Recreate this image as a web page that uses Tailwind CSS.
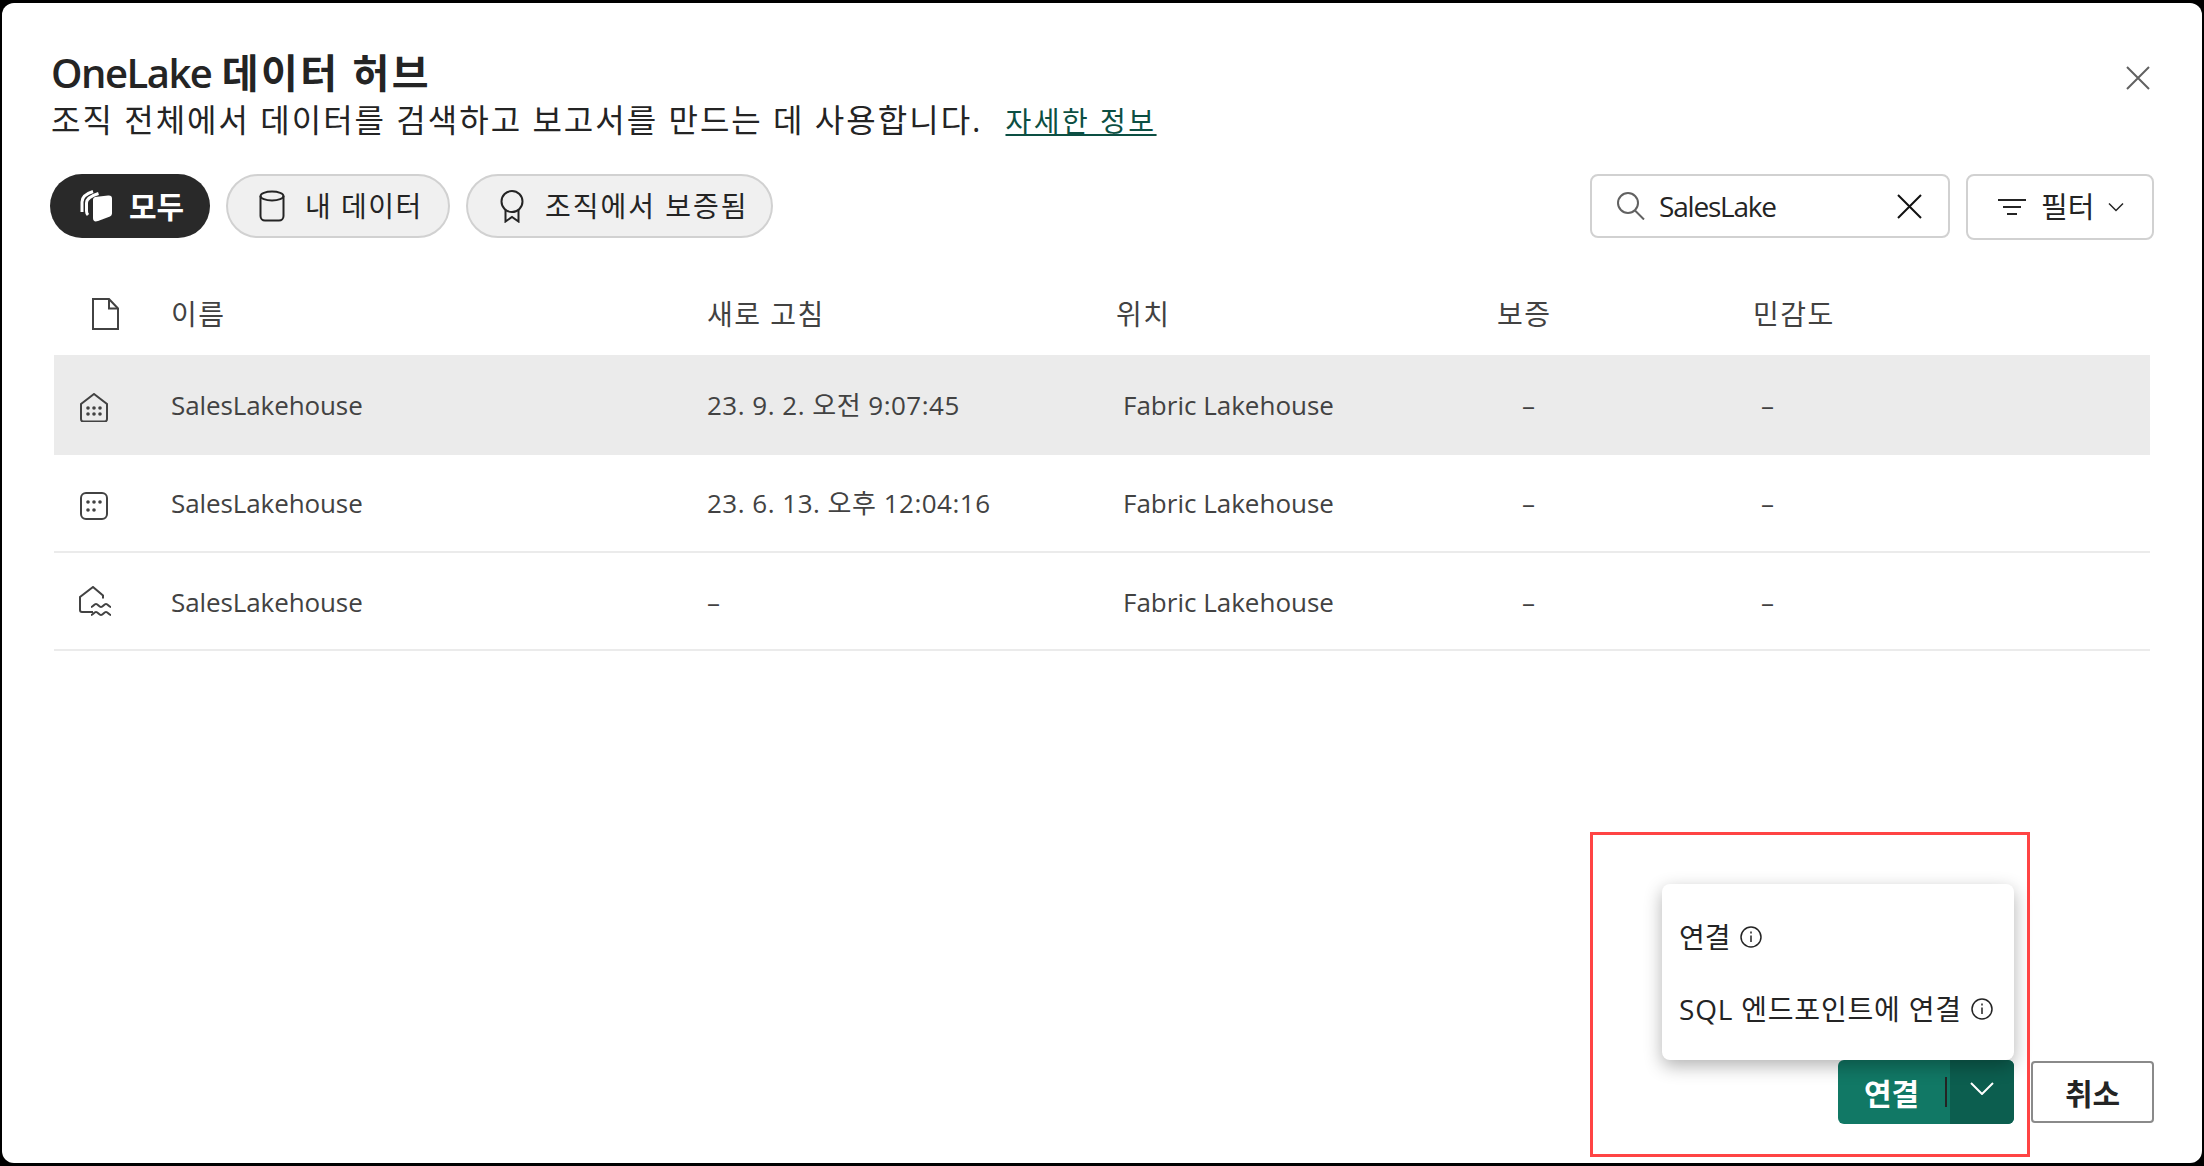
<!DOCTYPE html>
<html lang="ko">
<head>
  <meta charset="UTF-8" />
  <title>OneLake 데이터 허브</title>
  <script src="https://cdn.jsdelivr.net/npm/@tailwindcss/browser@4"></script>
</head>
<body class="bg-black font-['Open_Sans','Noto_Sans_CJK_KR',sans-serif] text-[#242424]">
  <div class="relative w-[2204px] h-[1166px] pt-[3px] px-[2px] pb-[3px] overflow-hidden">
    <div class="bg-white rounded-[12px] h-full flex flex-col">

      <!-- Header -->
      <header class="flex justify-between pl-[49px] pr-[52px] pt-[47px]">
        <div>
          <h1 class="text-[40px] leading-[46px] font-semibold"><span class="tracking-[-1.5px]">OneLake</span> <span class="tracking-[2.5px]">데이터 허브</span></h1>
          <p class="text-[32px] leading-[48px] tracking-[2px]">조직 전체에서 데이터를 검색하고 보고서를 만드는 데 사용합니다.<a href="#" class="ml-[23px] text-[28px] tracking-[2.5px] text-[#0c4f43] underline">자세한 정보</a></p>
        </div>
        <button class="mt-[16px] self-start text-[#616161]">
          <svg class="w-[24px] h-[24px]" viewBox="0 0 24 24" fill="none" stroke="currentColor" stroke-width="2"><path d="M1 1l22 22M23 1L1 23"/></svg>
        </button>
      </header>

      <!-- Toolbar -->
      <div class="flex items-start justify-between pl-[48px] pr-[48px] mt-[29px] h-[65px]">
        <div class="flex gap-[16px]">
          <button class="flex items-center h-[64px] w-[160px] pl-[29px] rounded-full bg-[#292929] text-white text-[30px] font-bold">
            <svg class="w-[34px] h-[32px] mr-[16px]" viewBox="0 0 34 32">
              <path fill="white" d="M14 9.500q0-2 2-2.500l13-1.500q4-.5 4 3v15q0 2-2 3l-12 4.500q-5 1.500-5-3z"/>
              <path fill="none" stroke="white" stroke-width="3" d="M3 22v-10c0-4 3-8 11-10.500"/>
              <path fill="none" stroke="white" stroke-width="3" d="M9 25c-1-1-1.500-2-1.500-4v-8c0-4 4-7 12-9.500"/>
            </svg>
            모두
          </button>
          <button class="flex items-center h-[64px] w-[224px] pl-[31px] rounded-full bg-[#f0f0f0] border-2 border-[#d1d1d1] text-[28px] tracking-[1.5px]">
            <svg class="w-[26px] h-[32px] mr-[20px]" viewBox="0 0 26 32" fill="none" stroke="#242424" stroke-width="2"><ellipse cx="13" cy="6" rx="11.500" ry="4.500"/><path d="M1.500 6v20c0 2.500 2 4.500 4.500 4.500h14c2.500 0 4.500-2 4.500-4.500V6"/></svg>
            내 데이터
          </button>
          <button class="flex items-center h-[64px] w-[307px] pl-[31px] rounded-full bg-[#f0f0f0] border-2 border-[#d1d1d1] text-[28px] tracking-[2px]">
            <svg class="w-[26px] h-[33px] mr-[20px]" viewBox="0 0 26 33" fill="none" stroke="#242424" stroke-width="2"><circle cx="13" cy="11.500" r="10.500"/><path d="M6.500 20v11.500L13 27l6.500 4.500V20"/></svg>
            조직에서 보증됨
          </button>
        </div>
        <div class="flex gap-[16px]">
          <div class="flex items-center w-[360px] h-[64px] pl-[24px] pr-[26px] rounded-[8px] border-2 border-[#d1d1d1] text-[28px]">
            <svg class="w-[30px] h-[28px] mr-[13px] shrink-0" viewBox="0 0 30 28" fill="none" stroke="#616161" stroke-width="2"><circle cx="12" cy="11" r="10"/><path d="M19 18.500l9 9"/></svg>
            <span class="flex-1 tracking-[-1.2px]">SalesLake</span>
            <svg class="w-[25px] h-[25px]" viewBox="0 0 25 25" fill="none" stroke="#111" stroke-width="2"><path d="M1 1l23 23M24 1L1 24"/></svg>
          </div>
          <button class="flex items-center w-[188px] h-[66px] pl-[30px] rounded-[8px] border-2 border-[#d1d1d1] text-[29px]">
            <svg class="w-[28px] h-[18px] mr-[15px]" viewBox="0 0 28 18" fill="none" stroke="#242424" stroke-width="2"><path d="M0 2h28M5 9h18M9 16h10"/></svg>
            필터
            <svg class="w-[16px] h-[10px] ml-[14px]" viewBox="0 0 16 10" fill="none" stroke="#242424" stroke-width="1.500"><path d="M1 1.500l7 7 7-7"/></svg>
          </button>
        </div>
      </div>

      <!-- Table -->
      <div class="ml-[52px] mr-[52px] text-[26px] text-[#424242]">
        <div class="grid grid-cols-[117px_536px_409px_381px_256px_1fr] items-center h-[116px] pt-[40px] pb-[6px] text-[28px] tracking-[1.5px]">
          <div class="pl-[38px]">
            <svg class="w-[27px] h-[32px]" viewBox="0 0 27 32" fill="none" stroke="#424242" stroke-width="2"><path d="M1 1h16l9 9.500V31H1z"/><path d="M17 1v9.500h9"/></svg>
          </div>
          <div>이름</div><div>새로 고침</div><div>위치</div><div>보증</div><div>민감도</div>
        </div>

        <div class="grid grid-cols-[117px_536px_409px_381px_256px_1fr] items-center h-[100px] bg-[#ebebeb]">
          <div class="pl-[26px] pt-[4px]">
            <svg class="w-[28px] h-[29px]" viewBox="0 0 28 29" fill="none" stroke="#424242" stroke-width="2"><path d="M1 11L14 1l13 10v15c0 1.500-1 2.500-2.500 2.500h-21C2 28.500 1 27.500 1 26z"/><g fill="#424242" stroke="none"><circle cx="8" cy="15" r="1.800"/><circle cx="14" cy="15" r="1.800"/><circle cx="20" cy="15" r="1.800"/><circle cx="8" cy="21" r="1.800"/><circle cx="14" cy="21" r="1.800"/><circle cx="20" cy="21" r="1.800"/></g></svg>
          </div>
          <div class="tracking-[-0.1px]">SalesLakehouse</div>
          <div class="tracking-[0.5px]">23. 9. 2. 오전 9:07:45</div>
          <div class="pl-[7px]">Fabric Lakehouse</div>
          <div class="pl-[25px]">–</div>
          <div class="pl-[8px]">–</div>
        </div>

        <div class="grid grid-cols-[117px_536px_409px_381px_256px_1fr] items-center h-[98px] border-b-2 border-[#ebebeb]">
          <div class="pl-[26px] pt-[6px]">
            <svg class="w-[28px] h-[28px]" viewBox="0 0 28 28" fill="none" stroke="#424242" stroke-width="2"><rect x="1" y="1" width="26" height="26" rx="5"/><g fill="#424242" stroke="none"><circle cx="8" cy="10" r="1.800"/><circle cx="14" cy="10" r="1.800"/><circle cx="20" cy="10" r="1.800"/><circle cx="8" cy="18" r="1.800"/><circle cx="14" cy="18" r="1.800"/></g></svg>
          </div>
          <div class="tracking-[-0.1px]">SalesLakehouse</div>
          <div class="tracking-[0.5px]">23. 6. 13. 오후 12:04:16</div>
          <div class="pl-[7px]">Fabric Lakehouse</div>
          <div class="pl-[25px]">–</div>
          <div class="pl-[8px]">–</div>
        </div>

        <div class="grid grid-cols-[117px_536px_409px_381px_256px_1fr] items-center h-[98px] pt-[2px] border-b-2 border-[#ebebeb]">
          <div class="pl-[25px]">
            <svg class="w-[34px] h-[32px]" viewBox="0 0 34 32" fill="none" stroke="#424242" stroke-width="2"><path d="M14 26H3c-1 0-2-1-2-2V11L14 1l10 8.500v3"/><path d="M12 21c2 0 3-3 5-3s3 3 5 3 3-3 5-3 3 3 5 3"/><path d="M12 29c2 0 3-3 5-3s3 3 5 3 3-3 5-3 3 3 5 3"/></svg>
          </div>
          <div class="tracking-[-0.1px]">SalesLakehouse</div>
          <div>–</div>
          <div class="pl-[7px]">Fabric Lakehouse</div>
          <div class="pl-[25px]">–</div>
          <div class="pl-[8px]">–</div>
        </div>
      </div>

      <!-- Footer -->
      <div class="mt-auto flex justify-end items-center gap-[17px] pr-[48px] pb-[39px]">
        <div class="relative flex h-[64px] w-[176px] rounded-[6px] bg-[#117865] text-white">
          <div class="absolute bottom-full right-0 w-[352px] h-[176px] bg-white rounded-[8px] shadow-[0_6px_18px_rgba(0,0,0,0.3)] flex flex-col justify-center gap-[28px] pt-[2px] pl-[17px] text-[28px] text-[#242424]">
            <div class="flex items-center h-[44px]">연결
              <svg class="w-[22px] h-[22px] ml-[9px]" viewBox="0 0 22 22" fill="none" stroke="#242424" stroke-width="1.500"><circle cx="11" cy="11" r="10"/><path d="M11 9.500V16M11 5.500v2"/></svg>
            </div>
            <div class="flex items-center h-[44px] tracking-[0.8px]">SQL 엔드포인트에 연결
              <svg class="w-[22px] h-[22px] ml-[9px]" viewBox="0 0 22 22" fill="none" stroke="#242424" stroke-width="1.500"><circle cx="11" cy="11" r="10"/><path d="M11 9.500V16M11 5.500v2"/></svg>
            </div>
          </div>
          <button class="w-[107px] pt-[3px] text-[30px] font-bold">연결</button>
          <div class="w-[2px] h-[30px] self-center bg-[#242424]"></div>
          <div class="w-[3px]"></div>
          <button class="flex-1 flex items-center justify-center bg-[#0c5e4f] rounded-r-[6px] pb-[8px]">
            <svg class="w-[24px] h-[13px]" viewBox="0 0 24 13" fill="none" stroke="white" stroke-width="2"><path d="M1 1l11 11L23 1"/></svg>
          </button>
        </div>
        <button class="w-[123px] h-[62px] pt-[2px] rounded-[4px] border-2 border-[#8a8a8a] bg-white text-[30px] font-bold">취소</button>
      </div>
    </div>

    <!-- Annotation -->
    <div class="absolute left-[1590px] top-[832px] w-[440px] h-[325px] border-[3px] border-[#ff4444]"></div>
  </div>
</body>
</html>
